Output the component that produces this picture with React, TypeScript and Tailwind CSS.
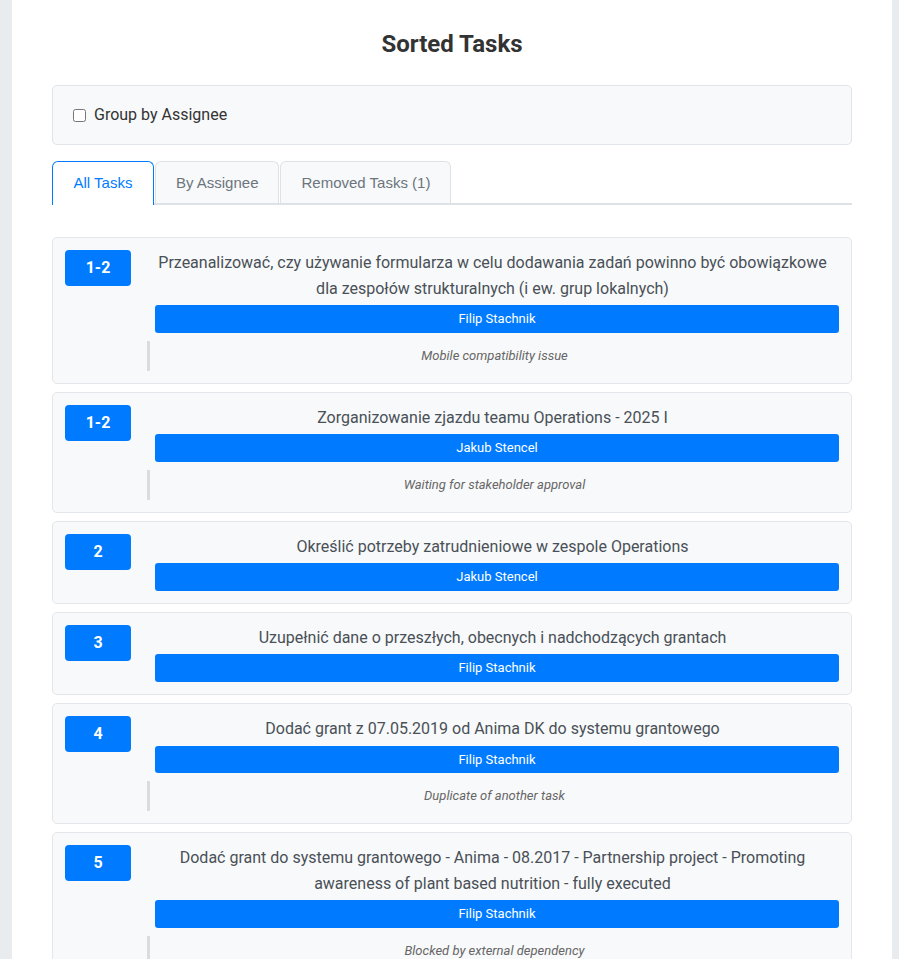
import React from "react";

type Task = {
  priority: string;
  title: string;
  assignee: string;
  note?: string;
};

const tasks: Task[] = [
  {
    priority: "1-2",
    title:
      "Przeanalizować, czy używanie formularza w celu dodawania zadań powinno być obowiązkowe dla zespołów strukturalnych (i ew. grup lokalnych)",
    assignee: "Filip Stachnik",
    note: "Mobile compatibility issue",
  },
  {
    priority: "1-2",
    title: "Zorganizowanie zjazdu teamu Operations - 2025 I",
    assignee: "Jakub Stencel",
    note: "Waiting for stakeholder approval",
  },
  {
    priority: "2",
    title: "Określić potrzeby zatrudnieniowe w zespole Operations",
    assignee: "Jakub Stencel",
  },
  {
    priority: "3",
    title: "Uzupełnić dane o przeszłych, obecnych i nadchodzących grantach",
    assignee: "Filip Stachnik",
  },
  {
    priority: "4",
    title: "Dodać grant z 07.05.2019 od Anima DK do systemu grantowego",
    assignee: "Filip Stachnik",
    note: "Duplicate of another task",
  },
  {
    priority: "5",
    title:
      "Dodać grant do systemu grantowego - Anima - 08.2017 - Partnership project - Promoting awareness of plant based nutrition - fully executed",
    assignee: "Filip Stachnik",
    note: "Blocked by external dependency",
  },
  {
    priority: "6",
    title: "Przygotować raport kwartalny dla zarządu",
    assignee: "Jakub Stencel",
  },
];

const tabs = ["All Tasks", "By Assignee", "Removed Tasks (1)"];

export default function App() {
  return (
    <div className="min-h-screen bg-[#e9ecef] pl-[12px] font-['Roboto',sans-serif]">
      <div className="w-[880px] bg-white px-10 pt-[30px] pb-10">
        <h1 className="text-center text-[24px] leading-[29px] font-bold text-[#333]">
          Sorted Tasks
        </h1>

        <div className="mt-[26px] flex h-[60px] items-center gap-[8px] rounded-[5px] border border-[#e1e4e8] bg-[#f8f9fa] px-5">
          <input type="checkbox" className="h-[13px] w-[13px]" />
          <label className="text-[16px] text-[#333]">Group by Assignee</label>
        </div>

        <div className="mt-[16px] flex border-b-2 border-[#dee2e6] font-['Liberation_Sans',Arial,sans-serif]">
          {tabs.map((t, i) => (
            <button
              key={t}
              className={
                i === 0
                  ? "-mb-[2px] mr-px rounded-t-[6px] border border-b-0 border-[#007bff] bg-white px-[20.5px] pt-[12px] pb-[14px] text-[15px] leading-[17px] text-[#007bff]"
                  : "mr-px rounded-t-[6px] border border-b-0 border-[#dee2e6] bg-[#f8f9fa] px-5 pt-[12px] pb-[12px] text-[15px] leading-[17px] text-[#6c757d]"
              }
            >
              {t}
            </button>
          ))}
        </div>

        <div className="mt-[32px] flex flex-col gap-[8px]">
          {tasks.map((task, i) => (
            <TaskCard key={i} task={task} />
          ))}
        </div>
      </div>
    </div>
  );
}

function TaskCard({ task }: { task: Task }) {
  return (
    <div className="flex gap-6 rounded-[5px] border border-[#e3e6ea] bg-[#f8f9fa] p-3">
      <div className="flex h-9 w-[66px] shrink-0 items-center justify-center rounded-[4px] bg-[#007bff] text-[16px] font-bold text-white">
        {task.priority}
      </div>
      <div className="min-w-0 flex-1">
        <div className="mb-1 pr-[9px] text-center text-[16px] leading-[1.6] text-[#495057]">
          {task.title}
        </div>
        <div className="flex h-[27.5px] items-center justify-center rounded-[3px] bg-[#007bff] text-[13px] text-white">
          {task.assignee}
        </div>
        {task.note && (
          <div className="mt-[8px] -ml-2 flex h-[30px] items-center justify-center border-l-[3px] border-[#dcdcdc] text-[13px] text-[#666] italic">
            {task.note}
          </div>
        )}
      </div>
    </div>
  );
}
